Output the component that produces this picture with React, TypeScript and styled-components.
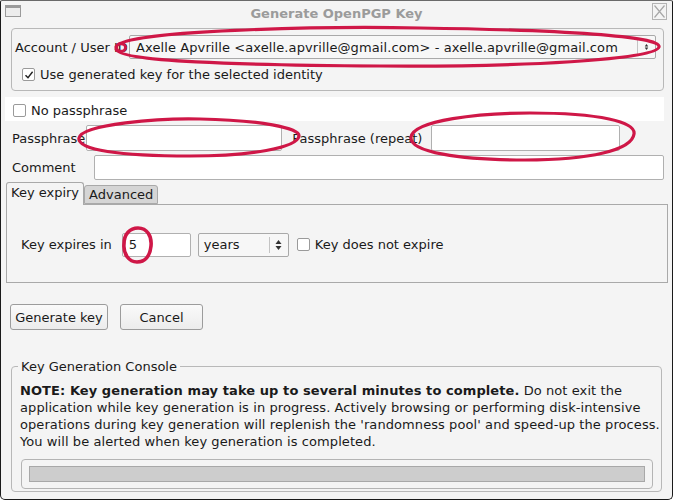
import styled, { createGlobalStyle } from 'styled-components';

const GlobalStyle = createGlobalStyle`
    body {
        margin: 0;
        background: #ffffff;
        font-family: "DejaVu Sans", "Noto Sans", sans-serif;
        font-size: 13px;
        color: #1a1a1a;
    }
    * {
        box-sizing: border-box;
    }
`

const Check = ({ checked }: { checked?: boolean }) => (
    <CheckBox>
        {checked && (
            <svg width="10" height="10" viewBox="0 0 10 10">
                <path d="M1.5 5.2 L4 7.8 L8.6 1.8" fill="none" stroke="#222" strokeWidth="1.4" />
            </svg>
        )}
    </CheckBox>
);

const UpDown = () => (
    <svg width="7" height="12" viewBox="0 0 7 12">
        <path d="M3.5 1 L6.5 5 L0.5 5 Z" fill="#333" />
        <path d="M3.5 11 L6.5 7 L0.5 7 Z" fill="#333" />
    </svg>
);

const App = () => {
    return (
        <>
            <GlobalStyle />
            <Window>
                <TitleBar>
                    <WinIcon />
                    <Title>Generate OpenPGP Key</Title>
                    <CloseBox>
                        <svg width="13" height="15" viewBox="0 0 13 15">
                            <path d="M1.5 1.5 L11.5 13.5 M11.5 1.5 L1.5 13.5" stroke="#a8a8a8" strokeWidth="1.2" />
                        </svg>
                    </CloseBox>
                </TitleBar>

                <AccountGroup>
                    <Row>
                        <AccountLabel>Account / User ID</AccountLabel>
                        <Combo>
                            <ComboText>Axelle Apvrille &lt;axelle.apvrille@gmail.com&gt; - axelle.apvrille@gmail.com</ComboText>
                            <ComboArrow small>
                                <UpDown />
                            </ComboArrow>
                        </Combo>
                    </Row>
                    <CheckRow indent={7} top={8}>
                        <Check checked />
                        <span>Use generated key for the selected identity</span>
                    </CheckRow>
                </AccountGroup>

                <NoPassBand>
                    <Check />
                    <span>No passphrase</span>
                </NoPassBand>

                <PassRow>
                    <FieldLabel>Passphrase</FieldLabel>
                    <TextInput width={196} left={1} />
                    <FieldLabel left={10}>Passphrase (repeat)</FieldLabel>
                    <TextInput width={189} left={9} />
                </PassRow>

                <CommentRow>
                    <FieldLabel>Comment</FieldLabel>
                    <TextInput width={570} left={18} />
                </CommentRow>

                <Tabs>
                    <Tab active>Key expiry</Tab>
                    <Tab>Advanced</Tab>
                </Tabs>
                <TabPanel>
                    <ExpiryRow>
                        <span>Key expires in</span>
                        <SpinInput>5</SpinInput>
                        <UnitCombo>
                            <span>years</span>
                            <ComboArrow>
                                <UpDown />
                            </ComboArrow>
                        </UnitCombo>
                        <CheckRow indent={8}>
                            <Check />
                            <span>Key does not expire</span>
                        </CheckRow>
                    </ExpiryRow>
                </TabPanel>

                <ButtonRow>
                    <Button width={98}>Generate key</Button>
                    <Button width={83}>Cancel</Button>
                </ButtonRow>

                <ConsoleGroup>
                    <Legend>Key Generation Console</Legend>
                    <Note>
                        <b>NOTE: Key generation may take up to several minutes to complete.</b> Do not exit the<br />
                        application while key generation is in progress. Actively browsing or performing disk-intensive<br />
                        operations during key generation will replenish the 'randomness pool' and speed-up the process.<br />
                        You will be alerted when key generation is completed.
                    </Note>
                    <ProgressOuter>
                        <ProgressInner />
                    </ProgressOuter>
                </ConsoleGroup>

                <Marks width="673" height="500" viewBox="0 0 673 500">
                    <g fill="none" stroke="#cf1747" strokeLinecap="round">
                        <path d="M116 47 C 118 30, 330 26, 420 28 C 560 30, 662 36, 659 47 C 656 60, 520 67, 380 66 C 240 65, 118 62, 116 49" strokeWidth="3.2" />
                        <ellipse cx="121" cy="47.5" rx="4.5" ry="3.8" strokeWidth="3" />
                        <path d="M79 138 C 82 124, 160 118, 200 119 C 260 120, 300 128, 299 136 C 297 148, 250 156, 190 156 C 120 156, 77 150, 79 138" strokeWidth="3.2" />
                        <path d="M411 137 C 414 120, 480 113, 530 113 C 600 113, 636 122, 634 134 C 632 150, 590 160, 525 160 C 460 160, 409 152, 411 137" strokeWidth="3.2" />
                        <path d="M124 244 C 124 234, 130 228, 138 228 C 147 228, 152 236, 151 246 C 150 256, 145 262, 137 262 C 129 262, 123 254, 124 244" strokeWidth="3.6" />
                    </g>
                </Marks>
            </Window>
        </>
    );
};

export default App;

const Window = styled.div`
    position: relative;
    width: 673px;
    height: 500px;
    background: #f4f4f4;
    border: 1px solid #1a1a1a;
    border-top-color: #6a6a6a;
    border-radius: 2px 2px 5px 5px;
    overflow: hidden;
    display: flex;
    flex-direction: column;
`

const TitleBar = styled.div`
    height: 22px;
    display: flex;
    align-items: center;
    justify-content: center;
    position: relative;
    flex-shrink: 0;
`

const WinIcon = styled.div`
    position: absolute;
    left: 4px;
    top: 4px;
    width: 16px;
    height: 12px;
    border: 1px solid #9a9a9a;
    border-top-width: 3px;
    background: #ececec;
`

const Title = styled.div`
    font-weight: bold;
    color: #9b9b9b;
    font-size: 13px;
    padding-top: 2px;
`

const CloseBox = styled.div`
    position: absolute;
    right: 5px;
    top: 2px;
    width: 15px;
    height: 17px;
    border: 1px solid #b4b4b4;
    display: flex;
    align-items: center;
    justify-content: center;
`

const AccountGroup = styled.div`
    margin: 5px 0 0 10px;
    width: 653px;
    height: 63px;
    border: 1px solid #b8b8b8;
    border-radius: 4px;
    padding: 6px 7px 0 3px;
    display: flex;
    flex-direction: column;
    flex-shrink: 0;
`

const Row = styled.div`
    display: flex;
    align-items: center;
    height: 24px;
`

const AccountLabel = styled.span`
    width: 114px;
    white-space: nowrap;
    flex-shrink: 0;
`

const Combo = styled.div`
    flex: 1;
    height: 24px;
    border: 1px solid #a9a9a9;
    border-radius: 2px;
    background: #f7f7f7;
    display: flex;
    align-items: center;
    padding-left: 6px;
`

const ComboText = styled.span`
    flex: 1;
    white-space: nowrap;
    overflow: hidden;
    letter-spacing: 0.1px;
`

const ComboArrow = styled.div<{ small?: boolean }>`
    width: ${p => (p.small ? 18 : 19)}px;
    height: ${p => (p.small ? 14 : 16)}px;
    border-left: 1px solid #c4c4c4;
    display: flex;
    align-items: center;
    justify-content: center;
    margin-left: auto;
    svg {
        transform: scale(${p => (p.small ? 0.6 : 1)});
    }
`

const CheckRow = styled.div<{ indent?: number; top?: number }>`
    display: flex;
    align-items: center;
    gap: 5px;
    margin-top: ${p => p.top ?? 0}px;
    margin-left: ${p => p.indent ?? 0}px;
    white-space: nowrap;
`

const CheckBox = styled.span`
    width: 13px;
    height: 13px;
    border: 1px solid #9a9a9a;
    border-radius: 2px;
    background: #ffffff;
    display: inline-flex;
    align-items: center;
    justify-content: center;
    flex-shrink: 0;
`

const NoPassBand = styled.div`
    margin: 6px 0 0 4px;
    width: 659px;
    height: 24px;
    background: #ffffff;
    display: flex;
    align-items: center;
    gap: 5px;
    padding: 2px 0 0 8px;
    flex-shrink: 0;
`

const PassRow = styled.div`
    display: flex;
    align-items: center;
    height: 26px;
    margin-top: 4px;
    padding-left: 11px;
    flex-shrink: 0;
`

const CommentRow = styled(PassRow)`
    height: 25px;
    margin-top: 4px;
`

const FieldLabel = styled.span<{ left?: number }>`
    margin-left: ${p => p.left ?? 0}px;
    white-space: nowrap;
`

const TextInput = styled.div<{ width: number; left?: number }>`
    width: ${p => p.width}px;
    height: 100%;
    margin-left: ${p => p.left ?? 0}px;
    background: #ffffff;
    border: 1px solid #b0b0b0;
    border-radius: 2px;
`

const Tabs = styled.div`
    display: flex;
    align-items: flex-end;
    margin: 2px 0 0 5px;
    height: 22px;
    flex-shrink: 0;
    position: relative;
    z-index: 1;
`

const Tab = styled.div<{ active?: boolean }>`
    height: ${p => (p.active ? 23 : 19)}px;
    padding: 0 4px;
    display: flex;
    align-items: ${p => (p.active ? 'flex-start' : 'center')};
    padding-top: ${p => (p.active ? 2 : 0)}px;
    background: ${p => (p.active ? '#f4f4f4' : '#d5d5d5')};
    border: 1px solid #a9a9a9;
    border-bottom: ${p => (p.active ? 'none' : '1px solid #a9a9a9')};
    border-radius: 3px 3px 0 0;
    margin-bottom: ${p => (p.active ? -1 : 0)}px;
    white-space: nowrap;
`

const TabPanel = styled.div`
    margin-left: 5px;
    width: 662px;
    height: 79px;
    border: 1px solid #a9a9a9;
    display: flex;
    align-items: center;
    padding: 0 0 0 14px;
    flex-shrink: 0;
`

const ExpiryRow = styled.div`
    display: flex;
    align-items: center;
    height: 24px;
    margin-top: 2px;
`

const SpinInput = styled.div`
    width: 69px;
    height: 24px;
    margin-left: 10px;
    background: #ffffff;
    border: 1px solid #b0b0b0;
    border-radius: 2px;
    padding-left: 6px;
    display: flex;
    align-items: center;
`

const UnitCombo = styled.div`
    width: 91px;
    height: 24px;
    margin-left: 7px;
    border: 1px solid #a9a9a9;
    border-radius: 2px;
    background: #f7f7f7;
    display: flex;
    align-items: center;
    padding-left: 5px;
`

const ButtonRow = styled.div`
    display: flex;
    gap: 12px;
    margin: 21px 0 0 9px;
    height: 26px;
    flex-shrink: 0;
`

const Button = styled.div<{ width: number }>`
    width: ${p => p.width}px;
    height: 26px;
    display: flex;
    align-items: center;
    justify-content: center;
    background: linear-gradient(#fafafa, #ececec);
    border: 1px solid #9c9c9c;
    border-radius: 3px;
    white-space: nowrap;
`

const ConsoleGroup = styled.div`
    position: relative;
    margin: 36px 0 0 10px;
    width: 651px;
    height: 126px;
    border: 1px solid #b8b8b8;
    border-radius: 4px;
    padding: 15px 0 0 8px;
    flex-shrink: 0;
`

const Legend = styled.span`
    position: absolute;
    left: 6px;
    top: -9px;
    padding: 0 3px;
    background: #f4f4f4;
    line-height: 17px;
`

const Note = styled.div`
    line-height: 17px;
    white-space: nowrap;
    letter-spacing: 0.08px;
`

const ProgressOuter = styled.div`
    margin: 9px 0 0 1px;
    width: 632px;
    height: 30px;
    border: 1px solid #b4b4b4;
    border-radius: 4px;
    padding: 6px 7px;
`

const ProgressInner = styled.div`
    height: 16px;
    background: #cdcdcd;
    border: 1px solid #a8a8a8;
`

const Marks = styled.svg`
    position: absolute;
    left: -1px;
    top: -1px;
    pointer-events: none;
`
